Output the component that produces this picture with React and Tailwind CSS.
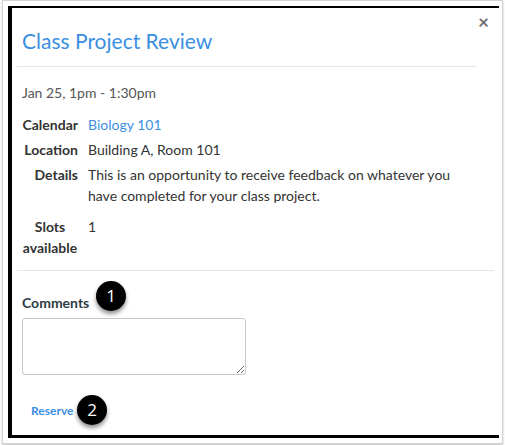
export default function App() {
  const font = { fontFamily: 'Lato, "Open Sans", sans-serif' };
  return (
    <div className="w-[505px] h-[445px] bg-white relative" style={font}>
      <div className="absolute left-[2px] top-0 w-[501px] h-[444px] border border-[#d4d4d4] shadow-[0_1px_2px_rgba(0,0,0,0.25)] bg-white pt-[5px] pl-[5px]">
        <div className="relative w-[491px] h-[432px] border-t-2 border-l-4 border-b-[3px] border-black bg-white">
          <button className="absolute right-[10px] top-[4px] text-[#6f6f6f] text-[19px] font-bold leading-none">×</button>
          <div className="pl-[5px] pr-[22px]">
            <div className="pt-[19px] pb-[11px] pl-[5px] border-b border-[#e6e6e6]">
              <h1 className="text-[21px] leading-[28px] text-[#3b8fe1] font-normal">Class Project Review</h1>
            </div>
          </div>
          <div className="pl-[10px] pt-[15px] text-[14px] text-[#555] leading-[21px]">Jan 25, 1pm - 1:30pm</div>
          <div className="pl-[10px] pt-[11px] text-[14px] leading-[21px] text-[#333]">
            <div className="grid grid-cols-[56px_1fr] gap-x-[10px] gap-y-[4px]">
              <div className="font-bold text-right">Calendar</div>
              <div className="text-[#3b8fe1]">Biology 101</div>
              <div className="font-bold text-right">Location</div>
              <div>Building A, Room 101</div>
              <div className="font-bold text-right">Details</div>
              <div className="pb-[6px] pr-[30px]">This is an opportunity to receive feedback on whatever you have completed for your class project.</div>
              <div className="font-bold text-center">Slots available</div>
              <div>1</div>
            </div>
          </div>
          <div className="ml-[5px] mr-[5px] mt-[12px] border-b border-[#e6e6e6]"></div>
          <div className="pl-[10px] pt-[21px]">
            <div className="text-[14px] font-bold text-[#2d3b45] leading-[21px]">Comments</div>
            <textarea className="mt-[5px] w-[224px] h-[57px] border border-[#c8c8c8] rounded-[3px] block"></textarea>
            <div className="pt-[27px] pl-[9px] text-[12px] font-bold text-[#3b8fe1]">Reserve</div>
          </div>
          <div className="absolute left-[84px] top-[273px] w-[30px] h-[30px] rounded-full bg-black text-white flex items-center justify-center text-[17px] shadow-[0_3px_4px_rgba(0,0,0,0.45)]" style={{ fontFamily: '"Open Sans", sans-serif' }}>1</div>
          <div className="absolute left-[65px] top-[387px] w-[30px] h-[30px] rounded-full bg-black text-white flex items-center justify-center text-[17px] shadow-[0_3px_4px_rgba(0,0,0,0.45)]" style={{ fontFamily: '"Open Sans", sans-serif' }}>2</div>
        </div>
      </div>
    </div>
  );
}
